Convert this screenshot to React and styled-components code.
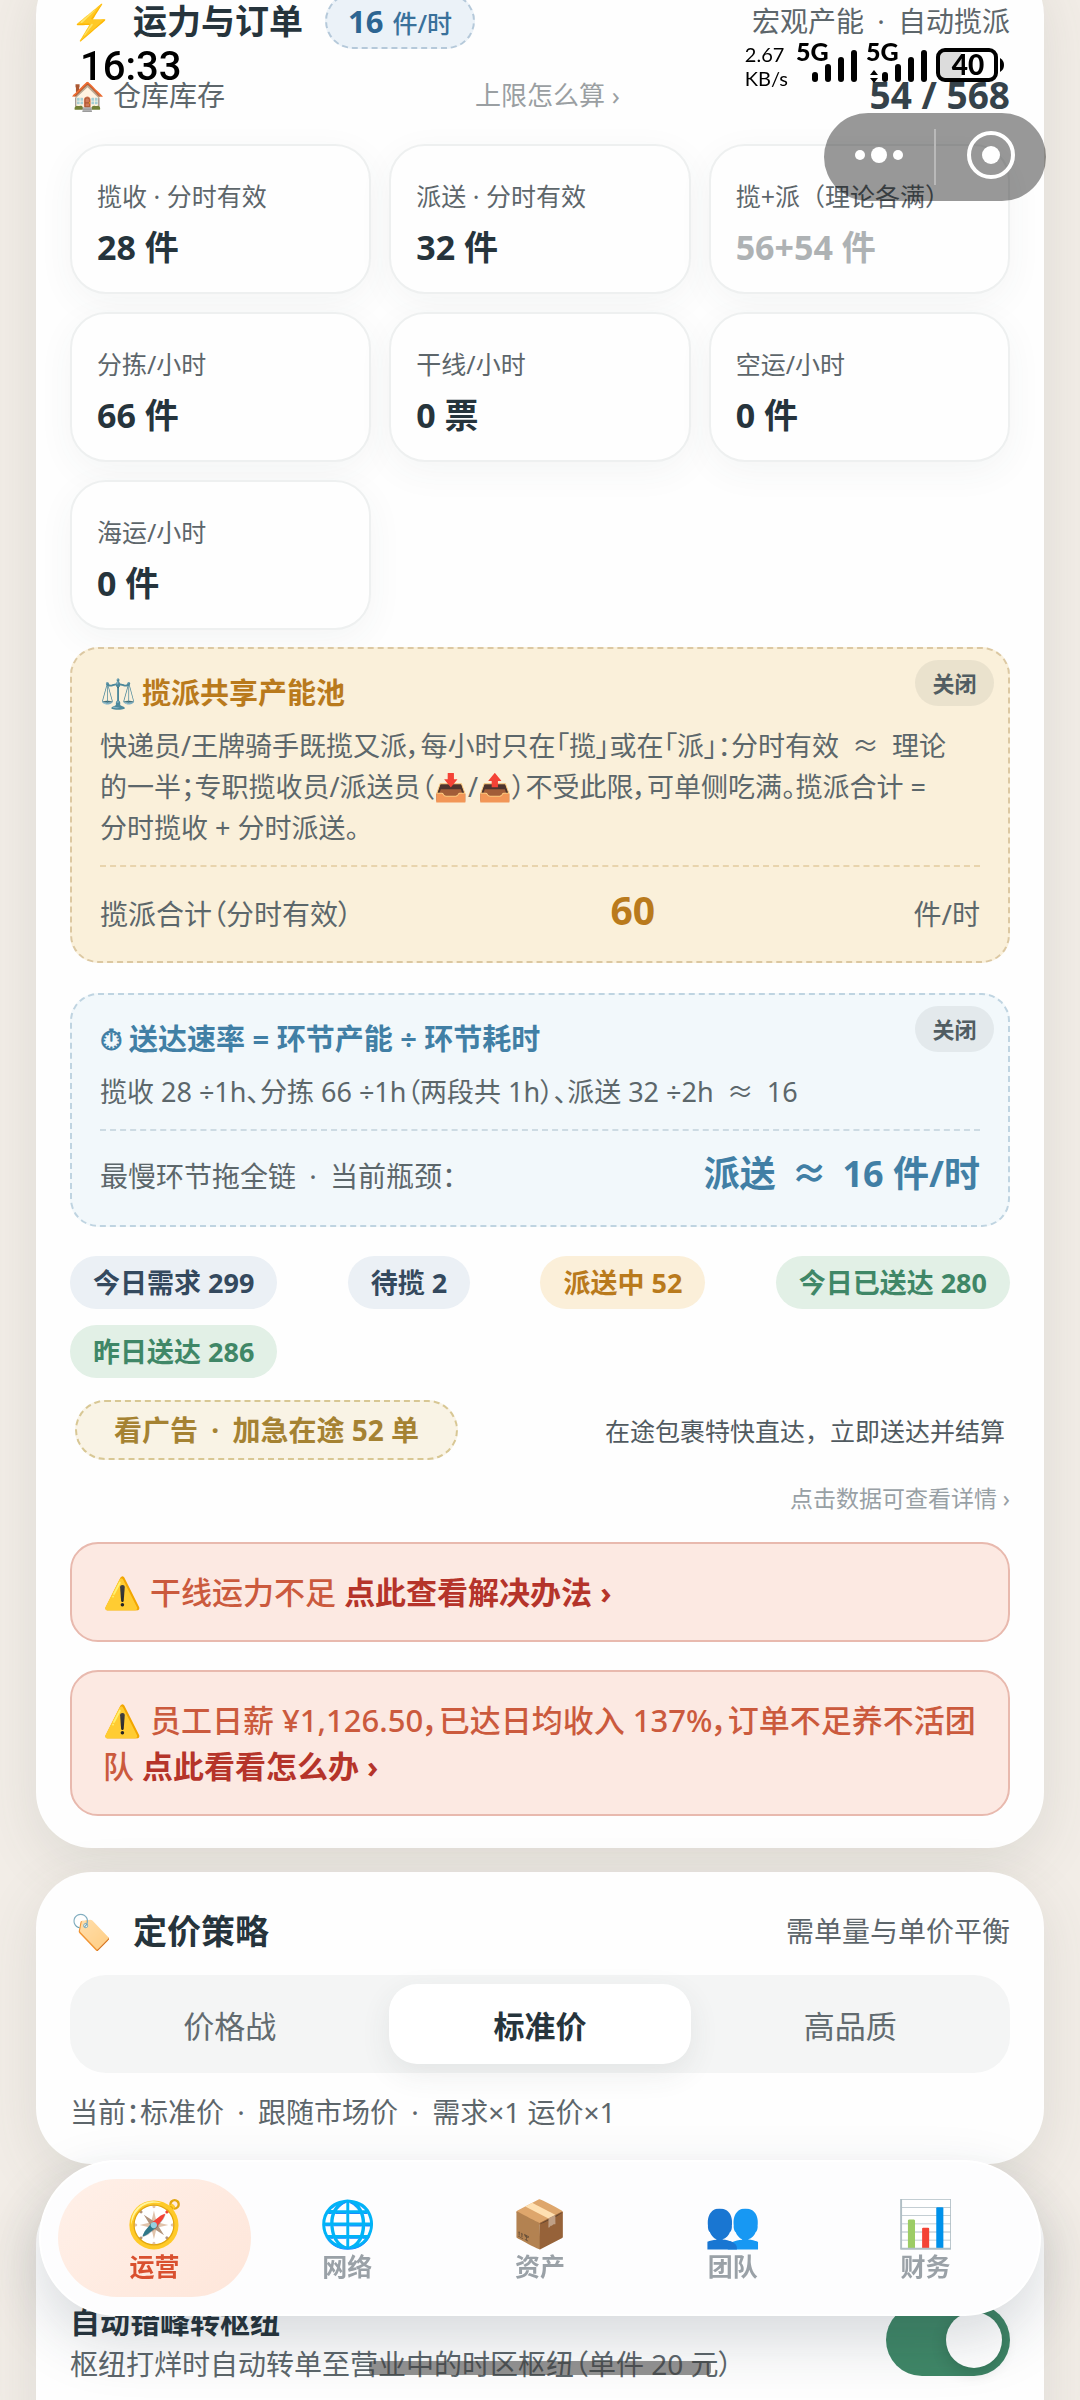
import React, { useState } from "react";
import styled, { createGlobalStyle } from "styled-components";

const GlobalStyle = createGlobalStyle`
  * {
    box-sizing: border-box;
  }

  body {
    margin: 0;
    background: #f2ede7;
    color: #26343c;
    font-family: "Noto Sans", "Noto Sans CJK SC", sans-serif;
  }

  button {
    font-family: inherit;
    border: none;
    margin: 0;
    padding: 0;
    background: none;
    cursor: pointer;
  }

  a {
    text-decoration: none;
  }
`;

const Screen = styled.div`
  position: relative;
  height: 100vh;
  overflow: hidden;
`;

/* the list is scrolled a little under the status bar */
const Content = styled.main`
  display: flex;
  flex-direction: column;
  gap: 24px;
  margin-top: -41px;
  padding: 0 36px;
`;

const Card = styled.section`
  padding: 34px 34px 32px;
  border-radius: 56px;
  background: #fefefe;
  box-shadow: 0 16px 56px rgba(70, 84, 76, 0.12);
`;

const SettingsCard = styled(Card)`
  display: flex;
  justify-content: space-between;
  align-items: flex-start;
  padding-top: 112px;
  padding-bottom: 80px;
`;

const CardHeader = styled.header`
  display: flex;
  align-items: center;
  height: ${({ $tall }) => ($tall ? 56 : 50)}px;
`;

const HeaderIcon = styled.span`
  width: 63px;
  font-size: 34px;
  line-height: 40px;
`;

const CardTitle = styled.h2`
  margin: 0;
  font-size: 34px;
  font-weight: 700;
  line-height: 50px;
`;

const Muted = styled.span`
  font-size: 28px;
  line-height: 40px;
  font-feature-settings: "palt";
  color: #5d666b;
`;

const HeaderNote = styled(Muted)`
  margin-left: auto;
`;

/* separators and operators with a little air round them */
const Sym = styled.span`
  margin: 0 6px;
`;

const RatePill = styled.button`
  display: flex;
  align-items: baseline;
  gap: 9px;
  margin-left: 22px;
  padding: 0 21px;
  height: 56px;
  border: 2px dashed #b5c9da;
  border-radius: 28px;
  background: #ebf2f8;
  color: #39719b;
  font-size: 25px;
  font-weight: 500;
  line-height: 52px;

  b {
    font-size: 31px;
    color: #2d6592;
  }
`;

const StockRow = styled.div`
  display: flex;
  justify-content: space-between;
  align-items: center;
  margin-top: 26px;
  height: 40px;
`;

const StockLabel = styled(Muted)`
  display: flex;
  align-items: center;
  gap: 8px;
`;

const TextButton = styled.button`
  font-size: 26px;
  line-height: 36px;
  color: #9a9fa2;
`;

const StockValue = styled.strong`
  font-size: 37px;
  line-height: 40px;
  color: #35424a;
`;

const Stats = styled.div`
  display: grid;
  grid-template-columns: repeat(3, 1fr);
  gap: 18px;
  margin-top: 29px;
`;

const Stat = styled.div`
  height: 150px;
  padding: 32px 25px 0;
  border: 2px solid #eef0f0;
  border-radius: 36px;
  background: #fefefe;
  box-shadow: 0 10px 36px rgba(60, 80, 80, 0.05);
`;

const StatLabel = styled.div`
  font-size: 25px;
  line-height: 36px;
  color: #5d666b;
  white-space: nowrap;
`;

const StatValue = styled.div`
  margin-top: 9px;
  font-size: 34px;
  font-weight: 700;
  line-height: 48px;
  color: ${({ $dim }) => ($dim ? "#aeb2b4" : "#26343c")};
`;

const panelTones = {
  amber: { bg: "#faf0da", border: "#dcc8a2", line: "#e8d4ad", ink: "#b97a1c" },
  blue: { bg: "#f2f8fb", border: "#bfd4e1", line: "#cddbe3", ink: "#417fa5" },
};

const Panel = styled.div`
  position: relative;
  margin-top: ${({ $first }) => ($first ? 17 : 30)}px;
  padding: 22px 28px 20px;
  border: 2px dashed ${({ $tone }) => panelTones[$tone].border};
  border-radius: 28px;
  background: ${({ $tone }) => panelTones[$tone].bg};
`;

const PanelTitle = styled.h3`
  display: flex;
  align-items: center;
  gap: 6px;
  margin: 0;
  font-size: 29px;
  font-weight: 700;
  line-height: 44px;
  color: ${({ $tone }) => panelTones[$tone].ink};
`;

const PanelText = styled.p`
  margin: 10px 0 0;
  padding-right: 20px;
  font-size: 27px;
  line-height: 41px;
  font-feature-settings: "palt";
  color: #5c676b;
`;

const PanelTotal = styled.div`
  display: flex;
  justify-content: space-between;
  align-items: baseline;
  height: 76px;
  margin-top: 17px;
  padding-top: 16px;
  border-top: 2px dashed ${({ $tone }) => panelTones[$tone].line};
  font-size: 28px;
  line-height: 54px;
  font-feature-settings: "palt";
  color: #5c676b;

  strong {
    font-size: ${({ $tone }) => ($tone === "amber" ? 39 : 36)}px;
    color: ${({ $tone }) => panelTones[$tone].ink};
  }
`;

const CloseButton = styled.button`
  position: absolute;
  top: 11px;
  right: 14px;
  width: 79px;
  height: 46px;
  border-radius: 23px;
  background: rgba(50, 65, 70, 0.08);
  color: #515d62;
  font-size: 22px;
  font-weight: 700;
  line-height: 44px;
`;

const chipTones = {
  navy: { bg: "#ebf0f5", ink: "#34495e" },
  amber: { bg: "#fbefd9", ink: "#b97a1c" },
  green: { bg: "#e2f0e6", ink: "#3f8767" },
};

const Chips = styled.div`
  display: flex;
  flex-wrap: wrap;
  justify-content: space-between;
  gap: 16px;
  margin-top: 29px;
`;

const Chip = styled.button`
  height: 53px;
  padding: 0 23px;
  border-radius: 27px;
  background: ${({ $tone }) => chipTones[$tone].bg};
  color: ${({ $tone }) => chipTones[$tone].ink};
  font-size: 27px;
  font-weight: 700;
  line-height: 53px;
`;

const AdRow = styled.div`
  display: flex;
  justify-content: space-between;
  align-items: center;
  margin-top: 22px;
  padding: 0 5px;
  font-size: 25px;
  color: #515a60;
`;

const AdButton = styled.button`
  height: 60px;
  padding: 0 37px;
  border: 2px dashed #d8c794;
  border-radius: 30px;
  background: #f9f3e5;
  color: #a58232;
  font-size: 28px;
  font-weight: 700;
  line-height: 56px;
`;

const Hint = styled.div`
  margin-top: 22px;
  font-size: 23px;
  line-height: 32px;
  text-align: right;
  color: #98a0a5;
`;

const Alert = styled.div`
  margin-top: 28px;
  padding: 25px 31px;
  border: 2px solid #e8b9ae;
  border-radius: 28px;
  background: #fce9e2;
  color: #cb5a3d;
  font-size: 31px;
  font-weight: 500;
  line-height: 46px;
  font-feature-settings: "palt";

  a {
    color: #b5342a;
    font-weight: 700;
  }
`;

const Segments = styled.div`
  display: grid;
  grid-template-columns: repeat(3, 1fr);
  gap: 9px;
  margin-top: 19px;
  padding: 9px;
  border-radius: 36px;
  background: #f4f5f5;
`;

const Segment = styled.button`
  height: 80px;
  border-radius: 28px;
  font-size: 31px;
  font-weight: ${({ $active }) => ($active ? 700 : 400)};
  color: ${({ $active }) => ($active ? "#26343c" : "#626b70")};
  background: ${({ $active }) => ($active ? "#ffffff" : "transparent")};
  box-shadow: ${({ $active }) =>
    $active ? "0 10px 30px rgba(50, 65, 70, 0.09)" : "none"};
`;

const PriceNote = styled(Muted)`
  display: block;
  margin-top: 19px;
`;

const SettingName = styled.label`
  display: block;
  font-size: 30px;
  font-weight: 700;
  line-height: 44px;
`;

const Toggle = styled.input`
  appearance: none;
  flex: none;
  display: flex;
  align-items: center;
  justify-content: ${({ checked }) => (checked ? "flex-end" : "flex-start")};
  width: 124px;
  height: 72px;
  margin: 4px 0 0;
  padding: 0 8px;
  border-radius: 36px;
  background: ${({ checked }) => (checked ? "#3f8767" : "#c9cfd2")};

  &::before {
    content: "";
    width: 56px;
    height: 56px;
    border-radius: 50%;
    background: #fff;
    box-shadow: 0 4px 16px rgba(0, 0, 0, 0.16);
  }
`;

const TabBar = styled.nav`
  position: fixed;
  left: 39px;
  right: 39px;
  bottom: 84px;
  display: grid;
  grid-template-columns: repeat(5, 1fr);
  padding: 17px;
  border: 2px solid #fff;
  border-radius: 78px;
  background: #fdfdfe;
  box-shadow: 0 24px 60px rgba(35, 48, 64, 0.18);
`;

const Tab = styled.a`
  display: flex;
  flex-direction: column;
  align-items: center;
  height: 118px;
  padding-top: 15px;
  border-radius: 59px;
  background: ${({ $active }) =>
    $active ? "linear-gradient(135deg, #fff0e8, #fee6da)" : "none"};
  color: ${({ $active }) => ($active ? "#d9502f" : "#9aa1a7")};
  font-size: 25px;
  font-weight: 700;
  line-height: 32px;
`;

const TabIcon = styled.span`
  height: 56px;
  font-size: 46px;
  line-height: 56px;
`;

const HomeIndicator = styled.div`
  position: fixed;
  bottom: 25px;
  left: 50%;
  width: 342px;
  height: 14px;
  margin-left: -171px;
  border-radius: 4px;
  background: rgba(60, 60, 60, 0.56);
`;

const StatusBar = styled.div`
  position: fixed;
  top: 42px;
  left: 80px;
  right: 76px;
  display: flex;
  justify-content: space-between;
  color: #000;
`;

const Clock = styled.time`
  font-family: Roboto, sans-serif;
  font-size: 40px;
  font-weight: 500;
  line-height: 50px;
`;

const StatusIcons = styled.div`
  display: flex;
  gap: 8px;
`;

const NetSpeed = styled.span`
  font-family: Lato, sans-serif;
  font-size: 20px;
  line-height: 24px;
`;

const Capsule = styled.div`
  position: fixed;
  top: 113px;
  right: 34px;
  display: flex;
  align-items: center;
  width: 222px;
  height: 88px;
  border-radius: 44px;
  background: rgba(0, 0, 0, 0.4);

  button {
    flex: 1;
    height: 88px;
  }
`;

const CapsuleDivider = styled.span`
  width: 2px;
  height: 56px;
  background: #b9b9b9;
`;

const Signal = ({ busy }) => (
  <svg width="62" height="42" viewBox="0 0 62 42" aria-hidden="true">
    <text x="0" y="19" fontFamily="Lato, sans-serif" fontSize="25" fontWeight="900">
      5G
    </text>
    {busy && (
      <>
        <path d="M4 33l4-5 4 5z" />
        <path d="M4 36l4 5 4-5z" />
      </>
    )}
    <rect x="16" y="30" width="6" height="10" rx="3" />
    <rect x="29" y="22" width="6" height="18" rx="3" />
    <rect x="42" y="15" width="6" height="25" rx="3" />
    <rect x="55" y="8" width="6" height="32" rx="3" />
  </svg>
);

const Battery = () => (
  <svg width="68" height="42" viewBox="0 0 68 42" aria-label="40%">
    <rect x="4" y="9" width="22" height="28" rx="5" fill="#dcdcdc" />
    <rect x="2" y="8" width="58" height="30" rx="7" fill="none" stroke="#000" strokeWidth="4" />
    <path d="M64 16c3 2 4 4 4 7s-1 5-4 7z" />
    <text
      x="32"
      y="33"
      textAnchor="middle"
      fontFamily="Lato, sans-serif"
      fontSize="28"
      fontWeight="900"
    >
      40
    </text>
  </svg>
);

const Dots = () => (
  <svg width="48" height="20" viewBox="0 0 48 20" fill="#fff" aria-hidden="true">
    <circle cx="5" cy="10" r="5" />
    <circle cx="24" cy="10" r="8" />
    <circle cx="43" cy="10" r="5" />
  </svg>
);

const Target = () => (
  <svg width="50" height="50" viewBox="0 0 50 50" fill="#fff" aria-hidden="true">
    <circle cx="25" cy="25" r="22" fill="none" stroke="#fff" strokeWidth="4" />
    <circle cx="25" cy="25" r="9" />
  </svg>
);

const stats = [
  { label: "揽收 · 分时有效", value: "28 件" },
  { label: "派送 · 分时有效", value: "32 件" },
  { label: "揽+派（理论各满）", value: "56+54 件", dim: true },
  { label: "分拣/小时", value: "66 件" },
  { label: "干线/小时", value: "0 票" },
  { label: "空运/小时", value: "0 件" },
  { label: "海运/小时", value: "0 件" },
];

const chips = [
  { text: "今日需求 299", tone: "navy" },
  { text: "待揽 2", tone: "navy" },
  { text: "派送中 52", tone: "amber" },
  { text: "今日已送达 280", tone: "green" },
  { text: "昨日送达 286", tone: "green" },
];

const prices = ["价格战", "标准价", "高品质"];

const tabs = [
  { label: "运营", icon: "🧭" },
  { label: "网络", icon: "🌐" },
  { label: "资产", icon: "📦" },
  { label: "团队", icon: "👥" },
  { label: "财务", icon: "📊" },
];

const App = () => {
  const [price, setPrice] = useState("标准价");
  const [autoHub, setAutoHub] = useState(true);

  return (
    <Screen>
      <GlobalStyle />
      <Content>
        <Card>
          <CardHeader $tall>
            <HeaderIcon>⚡</HeaderIcon>
            <CardTitle>运力与订单</CardTitle>
            <RatePill type="button">
              <b>16</b>件/时
            </RatePill>
            <HeaderNote>
              宏观产能 <Sym>·</Sym> 自动揽派
            </HeaderNote>
          </CardHeader>

          <StockRow>
            <StockLabel>
              <span>🏠</span>
              仓库库存
            </StockLabel>
            <TextButton type="button">上限怎么算 ›</TextButton>
            <StockValue>54 / 568</StockValue>
          </StockRow>

          <Stats>
            {stats.map((stat) => (
              <Stat key={stat.label}>
                <StatLabel>{stat.label}</StatLabel>
                <StatValue $dim={stat.dim}>{stat.value}</StatValue>
              </Stat>
            ))}
          </Stats>

          <Panel $tone="amber" $first>
            <CloseButton type="button">关闭</CloseButton>
            <PanelTitle $tone="amber">
              <span>⚖️</span>
              揽派共享产能池
            </PanelTitle>
            <PanelText>
              快递员/王牌骑手既揽又派，每小时只在「揽」或在「派」：分时有效{" "}
              <Sym>≈</Sym>{" "}
              理论的一半；专职揽收员/派送员（📥/📤）不受此限，可单侧吃满。揽派合计 =
              分时揽收 + 分时派送。
            </PanelText>
            <PanelTotal $tone="amber">
              <span>揽派合计（分时有效）</span>
              <strong>60</strong>
              <span>件/时</span>
            </PanelTotal>
          </Panel>

          <Panel $tone="blue">
            <CloseButton type="button">关闭</CloseButton>
            <PanelTitle $tone="blue">
              <span>⏱</span>
              送达速率 = 环节产能 ÷ 环节耗时
            </PanelTitle>
            <PanelText>
              揽收 28 ÷1h、分拣 66 ÷1h（两段共 1h）、派送 32 ÷2h <Sym>≈</Sym> 16
            </PanelText>
            <PanelTotal $tone="blue">
              <span>
                最慢环节拖全链 <Sym>·</Sym> 当前瓶颈：
              </span>
              <strong>
                派送 <Sym>≈</Sym> 16 件/时
              </strong>
            </PanelTotal>
          </Panel>

          <Chips>
            {chips.map((chip) => (
              <Chip key={chip.text} type="button" $tone={chip.tone}>
                {chip.text}
              </Chip>
            ))}
          </Chips>

          <AdRow>
            <AdButton type="button">
              看广告 <Sym>·</Sym> 加急在途 52 单
            </AdButton>
            <span>在途包裹特快直达，立即送达并结算</span>
          </AdRow>
          <Hint>点击数据可查看详情 ›</Hint>

          <Alert>
            ⚠️ 干线运力不足 <a href="#trunk">点此查看解决办法 ›</a>
          </Alert>
          <Alert>
            ⚠️ 员工日薪 ¥1,126.50，已达日均收入 137%，订单不足养不活团队{" "}
            <a href="#salary">点此看看怎么办 ›</a>
          </Alert>
        </Card>

        <Card>
          <CardHeader>
            <HeaderIcon>🏷️</HeaderIcon>
            <CardTitle>定价策略</CardTitle>
            <HeaderNote>需单量与单价平衡</HeaderNote>
          </CardHeader>
          <Segments>
            {prices.map((name) => (
              <Segment
                key={name}
                type="button"
                aria-pressed={price === name}
                $active={price === name}
                onClick={() => setPrice(name)}
              >
                {name}
              </Segment>
            ))}
          </Segments>
          <PriceNote>
            当前：标准价 <Sym>·</Sym> 跟随市场价 <Sym>·</Sym> 需求×1 运价×1
          </PriceNote>
        </Card>

        <SettingsCard>
          <div>
            <SettingName htmlFor="auto-hub">自动错峰转枢纽</SettingName>
            <Muted>枢纽打烊时自动转单至营业中的时区枢纽（单件 20 元）</Muted>
          </div>
          <Toggle
            id="auto-hub"
            type="checkbox"
            checked={autoHub}
            onChange={() => setAutoHub(!autoHub)}
          />
        </SettingsCard>
      </Content>

      <TabBar>
        {tabs.map((tab, index) => (
          <Tab key={tab.label} href={`#tab-${index}`} $active={index === 0}>
            <TabIcon>{tab.icon}</TabIcon>
            {tab.label}
          </Tab>
        ))}
      </TabBar>

      <StatusBar>
        <Clock>16:33</Clock>
        <StatusIcons>
          <NetSpeed>
            2.67
            <br />
            KB/s
          </NetSpeed>
          <Signal />
          <Signal busy />
          <Battery />
        </StatusIcons>
      </StatusBar>

      <Capsule>
        <button type="button" aria-label="更多">
          <Dots />
        </button>
        <CapsuleDivider />
        <button type="button" aria-label="关闭小程序">
          <Target />
        </button>
      </Capsule>

      <HomeIndicator />
    </Screen>
  );
};

export default App;
